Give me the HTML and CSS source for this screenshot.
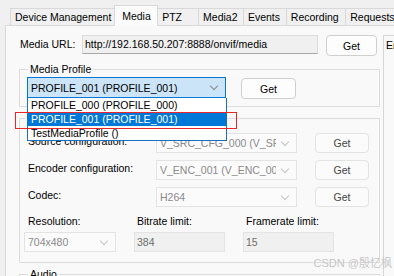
FILE: index.html
```html
<!DOCTYPE html>
<html lang="en">
<head>
    <meta charset="UTF-8">
    <title>ONVIF Client - Media</title>
    <link rel="stylesheet" href="styles.css">
</head>
<body>
    <div class="window">
        <div class="tabs">
            <div class="tab">Device Management</div>
            <div class="tab active">Media</div>
            <div class="tab">PTZ</div>
            <div class="tab">Media2</div>
            <div class="tab">Events</div>
            <div class="tab">Recording</div>
            <div class="tab">Requests</div>
        </div>

        <div class="page">
            <div class="main">
                <div class="url-row">
                    <span class="url-label">Media URL:</span>
                    <div class="textbox url">http://192.168.50.207:8888/onvif/media</div>
                    <button class="btn url-get">Get</button>
                </div>

                <fieldset class="group profile">
                    <legend>Media Profile</legend>
                    <div class="profile-row">
                        <div class="combo focused">
                            <span class="combo-text">PROFILE_001 (PROFILE_001)</span>
                            <span class="chevron"></span>
                        </div>
                        <button class="btn profile-get">Get</button>
                    </div>
                </fieldset>

                <fieldset class="group video">
                    <legend>Video</legend>
                    <div class="cfg-row">
                        <span class="cfg-label">Source configuration:</span>
                        <div class="combo disabled">
                            <span class="combo-text">V_SRC_CFG_000 (V_SRC_CFG_000)</span>
                            <span class="chevron"></span>
                        </div>
                        <button class="btn off">Get</button>
                    </div>
                    <div class="cfg-row">
                        <span class="cfg-label">Encoder configuration:</span>
                        <div class="combo disabled">
                            <span class="combo-text">V_ENC_001 (V_ENC_001)</span>
                            <span class="chevron"></span>
                        </div>
                        <button class="btn off">Get</button>
                    </div>
                    <div class="cfg-row">
                        <span class="cfg-label">Codec:</span>
                        <div class="combo disabled">
                            <span class="combo-text">H264</span>
                            <span class="chevron"></span>
                        </div>
                        <button class="btn off">Get</button>
                    </div>

                    <div class="limits">
                        <div class="limit">
                            <span class="limit-label">Resolution:</span>
                            <div class="combo disabled">
                                <span class="combo-text">704x480</span>
                                <span class="chevron"></span>
                            </div>
                        </div>
                        <div class="limit">
                            <span class="limit-label">Bitrate limit:</span>
                            <div class="textbox ro">384</div>
                        </div>
                        <div class="limit">
                            <span class="limit-label">Framerate limit:</span>
                            <div class="textbox ro">15</div>
                        </div>
                    </div>
                </fieldset>

                <fieldset class="group audio">
                    <legend>Audio</legend>
                </fieldset>
            </div>

            <div class="side">
                <span>Endpoint</span>
            </div>

            <!-- aufgeklappte Profilliste -->
            <ul class="dropdown">
                <li>PROFILE_000 (PROFILE_000)</li>
                <li class="selected">PROFILE_001 (PROFILE_001)</li>
                <li>TestMediaProfile ()</li>
            </ul>
            <div class="mark-box"></div>
        </div>

        <div class="watermark">CSDN @殷忆枫</div>
    </div>
</body>
</html>
```

FILE: styles.css
```css
html, body {
    margin: 0;
    padding: 0;
}
body {
    background-color: #f0f0f0;
    font-family: "Liberation Sans", Arial, sans-serif;
    font-size: 10.5px;
    color: #000;
}
.window {
    position: relative;
    width: 394px;
    height: 276px;
    overflow: hidden;
}

/* Tabs */
.tabs {
    display: flex;
    align-items: flex-end;
    height: 25px;
    padding-left: 10px;
}
.tab {
    box-sizing: border-box;
    height: 17px;
    line-height: 16px;
    padding-left: 4px;
    border: 1px solid #d9d9d9;
    border-bottom: none;
    border-right: none;
    background-color: #f0f0f0;
    white-space: nowrap;
    overflow: hidden;
}
.tab:nth-child(1) { width: 107px; }
.tab:nth-child(2) { width: 45px; }
.tab:nth-child(3) { width: 41px; }
.tab:nth-child(4) { width: 46px; }
.tab:nth-child(5) { width: 44px; }
.tab:nth-child(6) { width: 61px; }
.tab:nth-child(7) { width: 50px; }
.tab.active {
    position: relative;
    z-index: 1;
    height: 21px;
    margin-bottom: -1px;
    line-height: 20px;
    padding-left: 7px;
    background-color: #fbfbfb;
    border-right: 1px solid #d9d9d9;
}
.tab.active + .tab {
    border-left: none;
}

/* Page */
.page {
    position: relative;
    display: flex;
    height: 251px;
    margin-left: 5px;
    border-top: 1px solid #d9d9d9;
    border-left: 1px solid #d9d9d9;
    background-color: #f9f9f9;
}
.main {
    width: 361px;
    padding: 0 3px 0 13px;
    flex-shrink: 0;
}

/* Controls */
.textbox {
    box-sizing: border-box;
    height: 19px;
    line-height: 17px;
    padding-left: 2px;
    border: 1px solid #dcdcdc;
    background-color: #f0f0f0;
    white-space: nowrap;
    overflow: hidden;
}
.textbox.url {
    width: 236px;
    border-bottom-color: #a8a8a8;
}
.textbox.ro {
    height: 20px;
    line-height: 18px;
    color: #6d6d6d;
    border-color: #e4e4e4;
}
.btn {
    box-sizing: border-box;
    height: 21px;
    padding: 0;
    border: 1px solid #cfcfcf;
    border-radius: 4px;
    background-color: #fdfdfd;
    font-family: inherit;
    font-size: 10.5px;
    color: #000;
}
.btn.off {
    width: 54px;
    height: 20px;
    border-color: #e3e3e3;
    background-color: #fbfbfb;
    color: #444;
}
.combo {
    box-sizing: border-box;
    display: flex;
    align-items: center;
    height: 20px;
    padding: 0 6px 0 3px;
    border: 1px solid #e3e3e3;
    background-color: #fbfbfb;
}
.combo-text {
    flex: 1;
    white-space: nowrap;
    overflow: hidden;
}
.combo.disabled {
    color: #8a8a8a;
}
.combo.focused {
    width: 199px;
    height: 21px;
    border-color: #0078d7;
    background-color: #cce4f7;
}
.chevron {
    width: 5px;
    height: 5px;
    margin: 0 2px 3px 6px;
    border-right: 1px solid #8c8c8c;
    border-bottom: 1px solid #8c8c8c;
    transform: rotate(45deg);
    flex-shrink: 0;
}
.combo.disabled .chevron {
    border-color: #c4c4c4;
}

/* Media URL */
.url-row {
    display: flex;
    align-items: flex-start;
    margin-top: 9px;
}
.url-label {
    width: 62px;
    margin-left: 1px;
    line-height: 19px;
}
.url-get {
    width: 51px;
    margin-left: 8px;
}

/* Group boxes */
.group {
    margin: 0;
    padding: 0 7px;
    min-width: 0;
    border: 1px solid #dcdcdc;
}
.group legend {
    padding: 0 2px;
    margin-left: 1px;
    line-height: 13px;
}
.profile {
    margin-top: 7px;
    padding-bottom: 7px;
}
.profile-row {
    display: flex;
    align-items: flex-start;
    margin-top: 1px;
}
.profile-get {
    width: 55px;
    margin: 1px 0 0 15px;
}
.video {
    margin-top: 5px;
    padding: 0 0 10px 4px;
}
.cfg-row {
    display: grid;
    grid-template-columns: 110px 141px 54px;
    column-gap: 18px;
    align-items: start;
    margin: 8px 0 0 4px;
}
.cfg-row + .cfg-row {
    margin-top: 7px;
}
.cfg-label {
    line-height: 16px;
}
.limits {
    display: grid;
    grid-template-columns: 92px 91px 91px;
    column-gap: 18px;
    margin-top: 8px;
}
.limit {
    display: flex;
    flex-direction: column;
}
.limit-label {
    padding-left: 3px;
    line-height: 13px;
    margin-bottom: 4px;
}
.limit:first-child .limit-label {
    padding-left: 4px;
}
.audio {
    margin-top: 5px;
    height: 30px;
}

/* Rechte Box */
.side {
    flex: 1;
    margin-top: 9px;
    padding: 3px 0 0 2px;
    border-top: 1px solid #d6d6d6;
    border-left: 1px solid #d6d6d6;
    white-space: nowrap;
    overflow: hidden;
}

/* Overlay: Dropdown-Liste */
.dropdown {
    position: absolute;
    left: 21px;
    top: 72px;
    width: 200px;
    box-sizing: border-box;
    margin: 0;
    padding: 0;
    list-style: none;
    border: 1px solid #1b6fc0;
    border-top: none;
    background-color: #fff;
}
.dropdown li {
    height: 14px;
    line-height: 14px;
    padding-left: 3px;
    white-space: nowrap;
}
.dropdown li.selected {
    background-color: #0078d7;
    color: #fff;
}
.mark-box {
    position: absolute;
    left: 9px;
    top: 86px;
    width: 220px;
    height: 15px;
    border: 1px solid #e8262c;
}
.watermark {
    position: absolute;
    right: 2px;
    bottom: 6px;
    font-family: "Liberation Sans", "Noto Sans CJK SC", sans-serif;
    font-size: 11px;
    color: #c4c4c4;
    text-shadow: 0 0 1px #fff;
}
```
